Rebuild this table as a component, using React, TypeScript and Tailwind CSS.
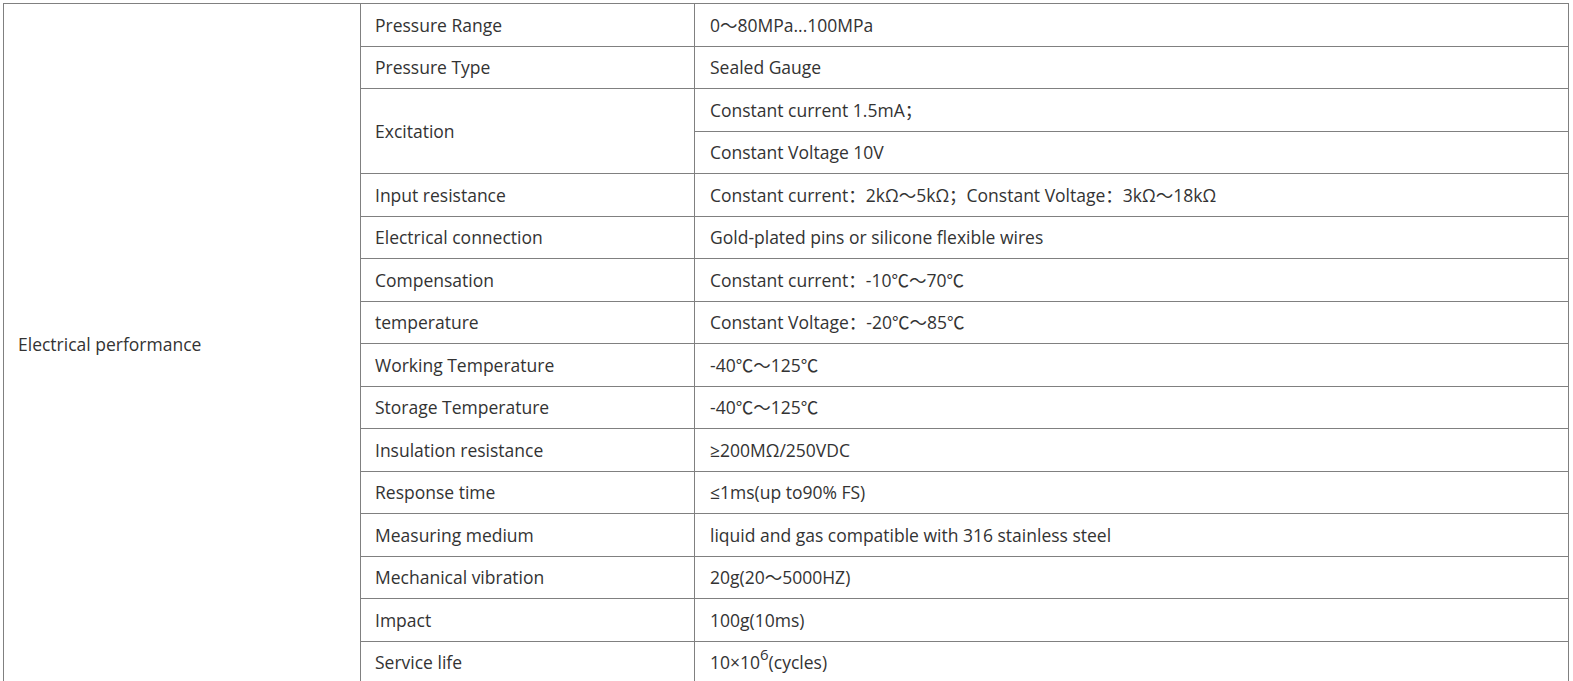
const rows: [string, string[]][] = [
  ["Pressure Range", ["0～80MPa...100MPa"]],
  ["Pressure Type", ["Sealed Gauge"]],
  ["Excitation", ["Constant current 1.5mA；", "Constant Voltage 10V"]],
  ["Input resistance", ["Constant current：2kΩ～5kΩ；Constant Voltage：3kΩ～18kΩ"]],
  ["Electrical connection", ["Gold-plated pins or silicone flexible wires"]],
  ["Compensation", ["Constant current：-10℃～70℃"]],
  ["temperature", ["Constant Voltage：-20℃～85℃"]],
  ["Working Temperature", ["-40℃～125℃"]],
  ["Storage Temperature", ["-40℃～125℃"]],
  ["Insulation resistance", ["≥200MΩ/250VDC"]],
  ["Response time", ["≤1ms(up to90% FS)"]],
  ["Measuring medium", ["liquid and gas compatible with 316 stainless steel"]],
  ["Mechanical vibration", ["20g(20～5000HZ)"]],
  ["Impact", ["100g(10ms)"]],
]

const cell = "border border-[#808080] px-[14px] h-[42.5px] align-middle"
const valueCell = "border border-[#808080] pl-[15px] pr-[14px] h-[42.5px] align-middle"

export default function App() {
  let total = 0
  rows.forEach(r => (total += r[1].length))
  total += 1

  return (
    <div className="bg-white min-h-screen pt-[3px] pl-[3px]" style={{ fontFamily: '"Open Sans", "Noto Sans CJK SC", sans-serif' }}>
      <table className="w-[1566px] border-collapse table-fixed text-[17.5px] leading-[24px] text-[#333]">
        <colgroup>
          <col className="w-[357px]" />
          <col className="w-[334px]" />
          <col />
        </colgroup>
        <tbody>
          {rows.map(([label, values], i) =>
            values.map((v, j) => (
              <tr key={`${i}-${j}`}>
                {i === 0 && j === 0 && (
                  <td rowSpan={total} className="border border-[#808080] px-[14px] align-middle">
                    Electrical performance
                  </td>
                )}
                {j === 0 && (
                  <td rowSpan={values.length} className={cell}>
                    {label}
                  </td>
                )}
                <td className={valueCell}>{v}</td>
              </tr>
            ))
          )}
          <tr>
            <td className={cell}>Service life</td>
            <td className={valueCell}>
              10×10<sup className="text-[15px] relative -top-[9px]">6</sup>(cycles)
            </td>
          </tr>
        </tbody>
      </table>
    </div>
  )
}
